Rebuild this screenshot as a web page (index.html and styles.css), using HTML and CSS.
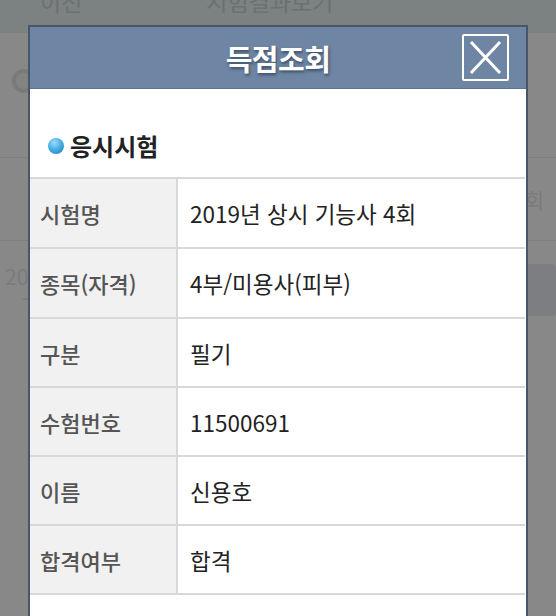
FILE: index.html
```html
<!DOCTYPE html>
<html lang="ko">
<head>
    <meta charset="UTF-8">
    <meta name="viewport" content="width=device-width, initial-scale=1.0">
    <title>득점조회</title>
    <link rel="stylesheet" href="styles.css">
</head>
<body>

    <!-- Page behind the popup (dimmed) -->
    <div class="page">
        <div class="topbar">
            <span class="top-prev">이전</span>
            <span class="top-title">시험결과보기</span>
        </div>
        <div class="bg-row bg-row-first">
            <span class="bg-dot"></span>
        </div>
        <div class="bg-row bg-row-second">
            <span class="bg-count">회</span>
        </div>
        <div class="bg-row bg-row-third">
            <div class="bg-exam">
                <span>20</span>
                <span>ㄱ</span>
            </div>
            <span class="bg-btn"></span>
        </div>
    </div>

    <!-- Popup -->
    <div class="modal">
        <div class="modal-head">
            <h1>득점조회</h1>
            <button class="close-btn" aria-label="닫기">
                <svg width="43" height="43" viewBox="0 0 43 43">
                    <path d="M7 6 L36 37 M36 6 L7 37" stroke="#fff" stroke-width="3" fill="none"/>
                </svg>
            </button>
        </div>

        <div class="modal-body">
            <h2 class="section-title"><span class="ball"></span>응시시험</h2>

            <div class="info">
                <div class="info-row">
                    <div class="info-label">시험명</div>
                    <div class="info-value">2019년 상시 기능사 4회</div>
                </div>
                <div class="info-row">
                    <div class="info-label">종목(자격)</div>
                    <div class="info-value">4부/미용사(피부)</div>
                </div>
                <div class="info-row">
                    <div class="info-label">구분</div>
                    <div class="info-value">필기</div>
                </div>
                <div class="info-row">
                    <div class="info-label">수험번호</div>
                    <div class="info-value">11500691</div>
                </div>
                <div class="info-row">
                    <div class="info-label">이름</div>
                    <div class="info-value">신용호</div>
                </div>
                <div class="info-row">
                    <div class="info-label">합격여부</div>
                    <div class="info-value">합격</div>
                </div>
            </div>
        </div>
    </div>

</body>
</html>
```

FILE: styles.css
```css
/* Basic Styles */
body {
    margin: 0;
    width: 556px;
    height: 616px;
    overflow: hidden;
    position: relative;
    font-family: "Noto Sans CJK KR", "Noto Sans", sans-serif;
    background-color: #888888;
}

/* Dimmed page behind popup */
.page {
    height: 616px;
}

.topbar {
    height: 33px;
    background-color: #7c8181;
    display: flex;
    align-items: flex-start;
    overflow: hidden;
    color: #6b7171;
    font-size: 23px;
}

.topbar span {
    margin-top: -16px;
}

.top-prev {
    margin-left: 40px;
}

.top-title {
    margin-left: 124px;
}

.bg-row {
    border-bottom: 1px solid #7f7f7f;
}

.bg-row-first {
    height: 88px;
}

.bg-dot {
    display: block;
    width: 16px;
    height: 16px;
    margin: 36px 0 0 12px;
    border-radius: 50%;
    border: 4px solid #7a7a7a;
    background-color: #838383;
}

.bg-row-second {
    height: 82px;
    display: flex;
    justify-content: flex-end;
    align-items: center;
}

.bg-count {
    color: #7b7b7b;
    font-size: 21px;
    margin-right: 12px;
}

.bg-row-third {
    height: 100px;
    display: flex;
    justify-content: space-between;
    align-items: flex-start;
    border-bottom: none;
}

.bg-exam {
    display: flex;
    flex-direction: column;
    color: #7b7b7b;
    font-size: 21px;
    line-height: 26px;
    margin: 22px 0 0 5px;
}

.bg-exam span:last-child {
    margin-left: 14px;
}

.bg-btn {
    display: block;
    width: 40px;
    height: 52px;
    margin: 23px -1px 0 0;
    border-radius: 6px;
    background-color: #7d7e82;
}

/* Popup */
.modal {
    position: absolute;
    left: 28px;
    top: 25px;
    width: 500px;
    height: 600px;
    box-sizing: border-box;
    border: 2px solid #48566b;
    border-bottom: none;
    background-color: #fff;
}

.modal-head {
    height: 61px;
    background-color: #6e86a3;
    border-bottom: 1px solid #5d7390;
    position: relative;
    display: flex;
    justify-content: center;
    align-items: center;
}

.modal-head h1 {
    margin: 0;
    color: #fff;
    font-size: 29px;
    font-weight: bold;
    letter-spacing: -0.5px;
    text-shadow: 1px 2px 3px rgba(30, 40, 60, 0.6);
}

.close-btn {
    position: absolute;
    right: 17px;
    top: 7px;
    width: 47px;
    height: 47px;
    padding: 0;
    box-sizing: border-box;
    border: 2px solid #fff;
    border-radius: 2px;
    background: transparent;
    display: flex;
    align-items: center;
    justify-content: center;
    cursor: pointer;
}

/* Section title */
.section-title {
    margin: 0;
    height: 88px;
    box-sizing: border-box;
    padding: 0 0 16px 18px;
    display: flex;
    align-items: flex-end;
    font-size: 24px;
    font-weight: bold;
    color: #222;
    line-height: 30px;
}

.section-title .ball {
    width: 16px;
    height: 16px;
    border-radius: 50%;
    margin: 0 6px 7px 0;
    background: radial-gradient(circle at 40% 30%, #9fdcfa 0%, #49aee6 45%, #1b78bd 100%);
}

/* Info rows */
.info {
    width: 495px;
    border-bottom: 2px solid #d8d8d8;
}

.info-row {
    display: grid;
    grid-template-columns: 148px 1fr;
    height: 69px;
    box-sizing: border-box;
    border-top: 2px solid #d8d8d8;
}

.info-row:nth-child(-n+2) {
    height: 70px;
}

.info-label {
    background-color: #f1f1f1;
    border-right: 2px solid #d8d8d8;
    color: #555;
    font-size: 22px;
    font-weight: 500;
    padding-left: 10px;
    display: flex;
    align-items: center;
}

.info-value {
    color: #222;
    font-size: 22.5px;
    padding-left: 12px;
    display: flex;
    align-items: center;
}
```
